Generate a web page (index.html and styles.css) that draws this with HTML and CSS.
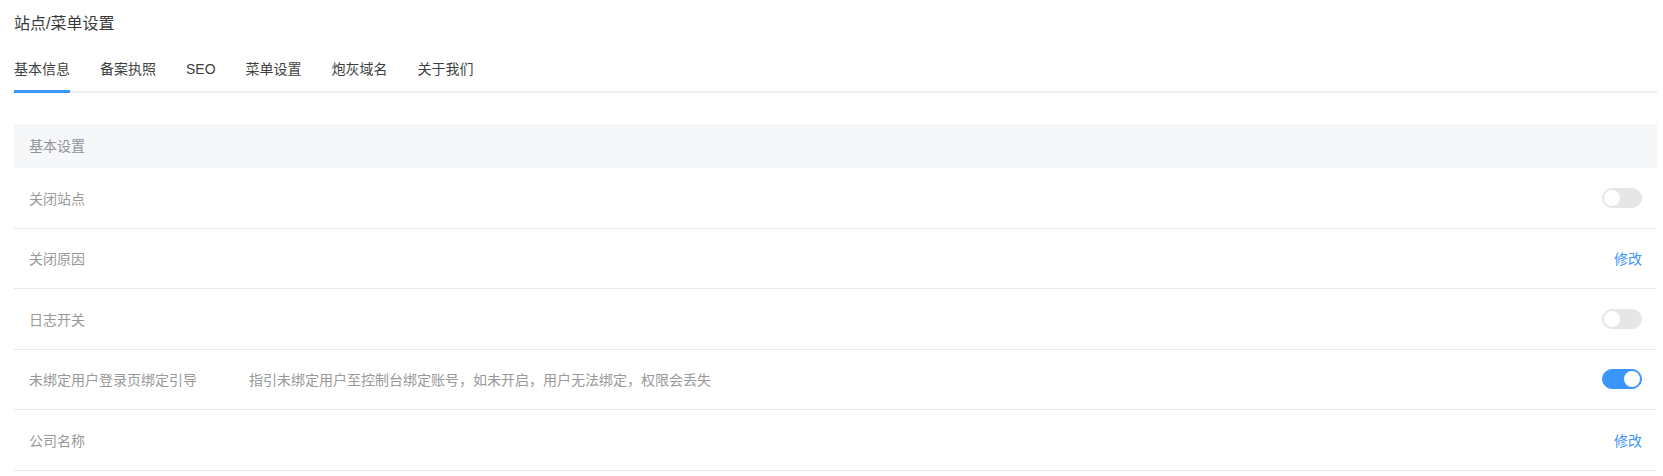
FILE: index.html
```html
<!DOCTYPE html>
<html lang="zh-CN">
<head>
  <meta charset="UTF-8">
  <meta name="viewport" content="width=device-width, initial-scale=1.0">
  <title>站点/菜单设置</title>
  <link rel="stylesheet" href="styles.css">
</head>
<body>

<div class="page">
  <h2 class="page-title">站点/菜单设置</h2>

  <!-- Tabs -->
  <div class="tabs">
    <div class="tab active">基本信息</div>
    <div class="tab">备案执照</div>
    <div class="tab">SEO</div>
    <div class="tab">菜单设置</div>
    <div class="tab">炮灰域名</div>
    <div class="tab">关于我们</div>
  </div>

  <!-- Basic settings -->
  <div class="settings">
    <div class="settings-head">基本设置</div>

    <div class="setting-row">
      <span class="setting-label">关闭站点</span>
      <span class="setting-desc"></span>
      <span class="switch"></span>
    </div>
    <div class="setting-row">
      <span class="setting-label">关闭原因</span>
      <span class="setting-desc"></span>
      <a class="edit-link" href="#">修改</a>
    </div>
    <div class="setting-row">
      <span class="setting-label">日志开关</span>
      <span class="setting-desc"></span>
      <span class="switch"></span>
    </div>
    <div class="setting-row">
      <span class="setting-label">未绑定用户登录页绑定引导</span>
      <span class="setting-desc">指引未绑定用户至控制台绑定账号，如未开启，用户无法绑定，权限会丢失</span>
      <span class="switch on"></span>
    </div>
    <div class="setting-row">
      <span class="setting-label">公司名称</span>
      <span class="setting-desc"></span>
      <a class="edit-link" href="#">修改</a>
    </div>
  </div>
</div>

</body>
</html>
```

FILE: styles.css
```css
/* Basic Styling */
body {
  margin: 0;
  font-family: "Liberation Sans", "Noto Sans CJK SC", sans-serif;
  background: #fff;
}
.page {
  padding: 12px 6px 0 14px;
}
.page-title {
  margin: 0;
  font-size: 16px;
  line-height: 24px;
  font-weight: normal;
  color: #3a3a3a;
}

/* Tabs */
.tabs {
  display: flex;
  gap: 30px;
  margin-top: 12px;
  border-bottom: 2px solid #eceef1;
}
.tab {
  font-size: 14px;
  line-height: 42px;
  color: #3d3f42;
  border-bottom: 3px solid transparent;
  margin-bottom: -2px;
  cursor: pointer;
}
.tab.active {
  border-bottom-color: #3a96fd;
}

/* Settings list */
.settings {
  margin-top: 31px;
}
.settings-head {
  height: 44px;
  line-height: 44px;
  padding: 0 15px;
  background: #f6f7f9;
  font-size: 14px;
  color: #909399;
}
.setting-row {
  display: flex;
  align-items: center;
  box-sizing: border-box;
  height: 60.5px;
  padding: 0 15px;
  border-bottom: 1px solid #e8e9ec;
  font-size: 14px;
}
.setting-label {
  width: 220px;
  flex-shrink: 0;
  color: #999;
}
.setting-desc {
  flex: 1;
  color: #999;
}
.edit-link {
  color: #3a96fd;
  text-decoration: none;
}

/* Switch */
.switch {
  position: relative;
  box-sizing: border-box;
  width: 40px;
  height: 20px;
  border-radius: 10px;
  border: 1px solid #e5e6e8;
  background: #e5e6e8;
  cursor: pointer;
}
.switch::after {
  content: "";
  position: absolute;
  top: 1px;
  left: 1px;
  width: 16px;
  height: 16px;
  border-radius: 50%;
  background: #fff;
}
.switch.on {
  background: #3a96fd;
  border-color: #3a96fd;
}
.switch.on::after {
  left: 21px;
}
```
